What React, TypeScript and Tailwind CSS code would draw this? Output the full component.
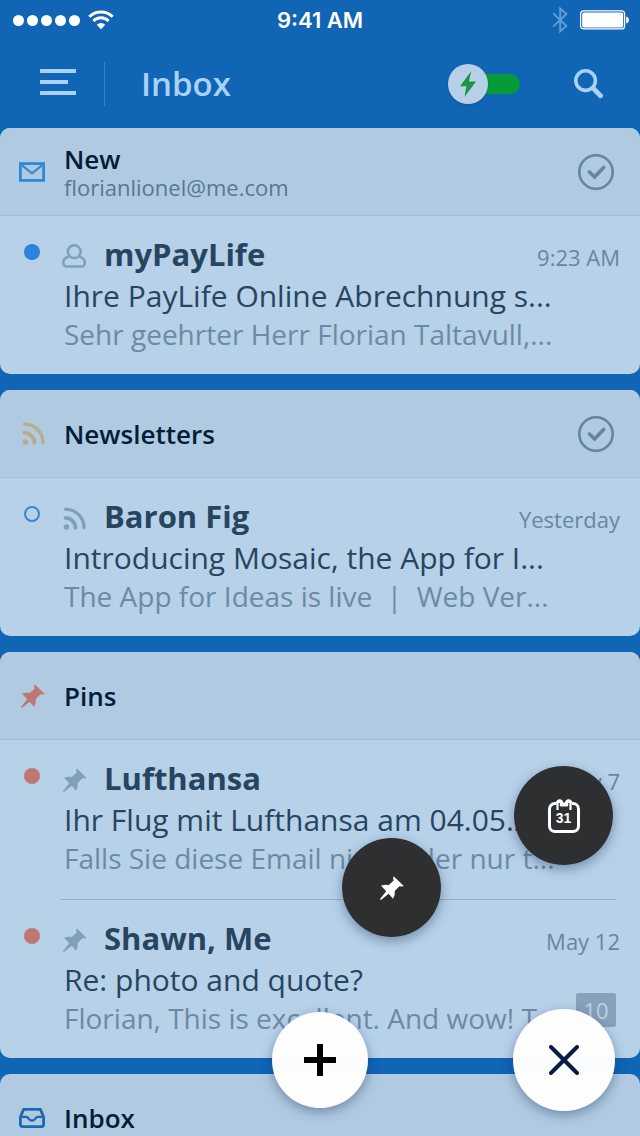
import type { ReactNode } from "react";

type IconProps = { className?: string };

function WifiIcon({ className }: IconProps) {
  return (
    <svg viewBox="0 0 26 20" className={className} fill="none" stroke="currentColor" strokeWidth="3" aria-hidden="true">
      <path d="M1.3 6.8a16.6 16.6 0 0 1 23.4 0" />
      <path d="M5.4 11a10.8 10.8 0 0 1 15.2 0" />
      <path d="M13 19.2l-4.2-4.4a6 6 0 0 1 8.4 0z" fill="currentColor" stroke="none" />
    </svg>
  );
}

function BluetoothIcon({ className }: IconProps) {
  return (
    <svg viewBox="0 0 16 28" className={className} fill="none" stroke="currentColor" strokeWidth="2" aria-hidden="true">
      <path d="M1.2 7.2L14.4 20 8.2 25.4V2.4L14.4 8 1.2 20.6" />
    </svg>
  );
}

function BatteryIcon({ className }: IconProps) {
  return (
    <svg viewBox="0 0 50 20" className={className} fill="none" aria-hidden="true">
      <rect x="0.6" y="0.9" width="44" height="18" rx="3" stroke="currentColor" strokeWidth="1.2" />
      <rect x="2.2" y="2.4" width="41" height="15" rx="1.6" fill="currentColor" />
      <path d="M46.2 6.6c3.6.4 3.6 6.4 0 6.8z" fill="currentColor" />
    </svg>
  );
}

function MenuIcon({ className }: IconProps) {
  return (
    <svg viewBox="0 0 36 26" className={className} fill="currentColor" aria-hidden="true">
      <path d="M0 0h36v4H0zM0 11h28v4H0zM0 22h36v4H0z" />
    </svg>
  );
}

function BoltIcon({ className }: IconProps) {
  return (
    <svg viewBox="0 0 16 26" className={className} fill="currentColor" aria-hidden="true">
      <path d="M11.3 0L0 15.2h6.4L4.4 26 16 10.4H8.9z" />
    </svg>
  );
}

function SearchIcon({ className }: IconProps) {
  return (
    <svg viewBox="0 0 30 30" className={className} fill="none" stroke="currentColor" aria-hidden="true">
      <circle cx="11.6" cy="11.6" r="9.8" strokeWidth="3.6" />
      <path d="M19 19l7.6 7.8" strokeWidth="4.8" strokeLinecap="round" />
    </svg>
  );
}

function MailIcon({ className }: IconProps) {
  return (
    <svg viewBox="0 0 26 20" className={className} fill="none" stroke="currentColor" aria-hidden="true">
      <rect x="1.4" y="1.6" width="23.2" height="16.8" strokeWidth="2.8" />
      <path d="M3 3.4l10 8 10-8" strokeWidth="2.2" />
    </svg>
  );
}

function RssIcon({ className }: IconProps) {
  return (
    <svg viewBox="0 0 24 24" className={className} fill="none" stroke="currentColor" strokeWidth="3.4" strokeLinecap="round" aria-hidden="true">
      <path d="M2.6 2.2A19.4 19.4 0 0 1 22 21.6" />
      <path d="M2.6 11.4a10.4 10.4 0 0 1 10.4 10.2" strokeWidth="4" />
      <circle cx="3.6" cy="20.8" r="2.9" fill="currentColor" stroke="none" />
    </svg>
  );
}

function PinIcon({ className }: IconProps) {
  return (
    <svg viewBox="0 0 24 24" className={className} fill="currentColor" aria-hidden="true">
      <path d="M13.6 .3L23.8 9.9 21.8 10.6 19.4 10.3 14.8 15.1Q15.400 19 13 22.800L8.700 17.700.9 23.900 0 23.100 6.200 15.200 1 9.800Q4.600 8.100 8.800 9L13.700 4.500 13.100 2.200z" />
    </svg>
  );
}

function InboxIcon({ className }: IconProps) {
  return (
    <svg viewBox="0 0 26 20" className={className} fill="none" stroke="currentColor" strokeLinejoin="round" aria-hidden="true">
      <path d="M4.6 1.4h16.8l3.2 7.6v7.6a2 2 0 0 1-2 2H3.4a2 2 0 0 1-2-2V9z" strokeWidth="2.8" />
      <path d="M2 8.8h5.4c1.2 0 1.4.6 2 1.6 1.8 3 5.4 3 7.2 0 .6-1 .8-1.6 2-1.6H24" strokeWidth="2.2" />
    </svg>
  );
}

function PersonIcon({ className }: IconProps) {
  return (
    <svg viewBox="0 0 24 24" className={className} fill="none" stroke="currentColor" strokeWidth="2.5" aria-hidden="true">
      <circle cx="12.2" cy="7.6" r="6.4" />
      <path d="M7 12.600C3.200 13.600 1.300 15.800 1.300 18.400c0 2.600 1.400 4.200 4 4.200h13.600c2.600 0 3.900-1.600 3.900-4.200 0-2.600-1.900-4.800-5.700-5.800" />
    </svg>
  );
}

function CheckCircleIcon({ className }: IconProps) {
  return (
    <svg viewBox="0 0 36 36" className={className} fill="none" stroke="currentColor" aria-hidden="true">
      <circle cx="18" cy="18" r="16.7" strokeWidth="2.6" />
      <path d="M11.4 18l5.2 5 9-9.6" strokeWidth="3.6" strokeLinecap="round" />
    </svg>
  );
}

function CalendarIcon({ className }: IconProps) {
  return (
    <svg viewBox="0 0 32 34" className={className} fill="none" stroke="currentColor" strokeWidth="3" aria-hidden="true">
      <path d="M8.5 4.5H7A5.5 5.5 0 0 0 1.5 10v17A5.5 5.5 0 0 0 7 32.5h18a5.5 5.5 0 0 0 5.5-5.5V10A5.5 5.5 0 0 0 25 4.5h-1.5" />
      <path d="M9.500 11V4a2 2 0 0 1 4 0v2.300h5V4a2 2 0 0 1 4 0V11" strokeWidth="2.200" />
      <path d="M9.500 4a2 2 0 0 1 4 0v1.300h5V4a2 2 0 0 1 4 0" strokeWidth="3.400" />
    </svg>
  );
}

function PlusIcon({ className }: IconProps) {
  return (
    <svg viewBox="0 0 32 32" className={className} stroke="currentColor" strokeWidth="6" aria-hidden="true">
      <path d="M16 0v32M0 16h32" />
    </svg>
  );
}

function CloseIcon({ className }: IconProps) {
  return (
    <svg viewBox="0 0 30 30" className={className} stroke="currentColor" strokeWidth="4" strokeLinecap="round" aria-hidden="true">
      <path d="M2 2l26 26M28 2L2 28" />
    </svg>
  );
}

function StatusBar() {
  return (
    <div className="grid h-10 grid-cols-3 items-center px-[10px] text-white">
      <div className="flex items-center gap-2 pl-[3px]">
        <div className="flex gap-[3px]">
          {[1, 2, 3, 4, 5].map((dot) => (
            <span key={dot} className="size-[11px] rounded-full bg-white" />
          ))}
        </div>
        <WifiIcon className="h-5 w-[26px]" />
      </div>
      <span className="text-center font-[Inter,sans-serif] text-[22px] font-semibold">9:41 AM</span>
      <div className="flex items-center justify-end gap-3">
        <BluetoothIcon className="h-7 w-4 text-[#5c9bd8]" />
        <BatteryIcon className="h-5 w-[50px]" />
      </div>
    </div>
  );
}

function TopBar() {
  return (
    <header className="flex h-[88px] items-center pr-9 pl-10 text-[#a9d2fb]">
      <button type="button" aria-label="Menu" className="pb-1">
        <MenuIcon className="h-[26px] w-9" />
      </button>
      <span className="ml-7 h-11 w-px bg-[#3a7fc4]" />
      <h1 className="ml-9 flex-1 text-[33px] font-semibold">Inbox</h1>
      <button type="button" role="switch" aria-checked="true" aria-label="Smart inbox" className="flex items-center">
        <span className="z-10 flex size-10 items-center justify-center rounded-full bg-[#b7d0e8] shadow-sm">
          <BoltIcon className="h-[26px] w-4 text-[#1a9640]" />
        </span>
        <span className="-ml-2 h-5 w-10 rounded-r-full bg-[#079a38]" />
      </button>
      <button type="button" aria-label="Search" className="ml-[54px]">
        <SearchIcon className="size-[30px]" />
      </button>
    </header>
  );
}

type SectionProps = {
  title: string;
  subtitle?: string;
  icon: ReactNode;
  checkable?: boolean;
  children?: ReactNode;
};

function Section({ title, subtitle, icon, checkable, children }: SectionProps) {
  return (
    <section className="shrink-0 overflow-hidden rounded-[10px] bg-[#b7d1e9]">
      <div className="flex h-[88px] items-center border-b border-[#a3bdd6] bg-[#b0cae2] pr-[26px]">
        <span className="flex w-16 justify-center">{icon}</span>
        <div className="flex-1">
          <h2 className="text-[26px] leading-8 font-semibold text-[#031d36]">{title}</h2>
          {subtitle && <p className="text-[22px] leading-[25px] text-[#587792]">{subtitle}</p>}
        </div>
        {checkable && (
          <button type="button" aria-label={`Mark ${title} as done`} className="text-[#6484a4]">
            <CheckCircleIcon className="size-9" />
          </button>
        )}
      </div>
      {children}
    </section>
  );
}

type MessageProps = {
  marker: string;
  icon: ReactNode;
  sender: string;
  time: string;
  subject: string;
  preview: string;
  count?: number;
};

function Message({ marker, icon, sender, time, subject, preview, count }: MessageProps) {
  return (
    <article className="flex h-[158px] pt-[18px] whitespace-pre">
      <div className="flex w-[60px] shrink-0 justify-center pt-[10px] pl-1">
        <span className={`size-4 rounded-full ${marker}`} />
      </div>
      <div className="min-w-0 flex-1 pr-5 pl-1">
        <div className="flex h-11 items-center">
          <span className="flex w-10 text-[#829fba]">{icon}</span>
          <h3 className="flex-1 pb-1 text-[31px] leading-10 font-bold text-[#27455f]">{sender}</h3>
          <time className="pt-0.5 text-[22px] text-[#6886a0]">{time}</time>
        </div>
        <p className="text-[30px] leading-9 text-[#27455f]">{subject}</p>
        <div className="flex h-10 items-center justify-between pr-1">
          <p className="text-[28px] leading-10 text-[#6c8aa4]">{preview}</p>
          {count && (
            <span className="mb-4 w-10 rounded-xs bg-[#87a1ba] text-center text-[22px] leading-[34px] text-[#b7d1e9]">
              {count}
            </span>
          )}
        </div>
      </div>
    </article>
  );
}

type FabProps = { label: string; className: string; children: ReactNode };

function Fab({ label, className, children }: FabProps) {
  return (
    <button
      type="button"
      aria-label={label}
      className={`absolute flex items-center justify-center rounded-full shadow-[0_4px_12px_rgba(20,40,80,0.4)] ${className}`}
    >
      {children}
    </button>
  );
}

export default function App() {
  return (
    <div className="relative flex h-screen flex-col overflow-hidden bg-[#1065b4] font-['Open_Sans',sans-serif]">
      <StatusBar />
      <TopBar />
      <main className="flex min-h-0 flex-1 flex-col gap-4 overflow-hidden">
        <Section
          title="New"
          subtitle="florianlionel@me.com"
          icon={<MailIcon className="h-5 w-[26px] text-[#3287d7]" />}
          checkable
        >
          <Message
            marker="bg-[#2b84da]"
            icon={<PersonIcon className="-ml-0.5 size-6" />}
            sender="myPayLife"
            time="9:23 AM"
            subject="Ihre PayLife Online Abrechnung s..."
            preview="Sehr geehrter Herr Florian Taltavull,..."
          />
        </Section>
        <Section title="Newsletters" icon={<RssIcon className="ml-0.5 size-[23px] text-[#b9ad86]" />} checkable>
          <Message
            marker="border-2 border-[#3b84cb]"
            icon={<RssIcon className="-ml-px size-[23px]" />}
            sender="Baron Fig"
            time="Yesterday"
            subject="Introducing Mosaic, the App for I..."
            preview="The App for Ideas is live  |  Web Ver..."
          />
        </Section>
        <Section title="Pins" icon={<PinIcon className="ml-0.5 size-6 text-[#bf7774]" />}>
          <Message
            marker="bg-[#bf7774]"
            icon={<PinIcon className="-ml-px size-6" />}
            sender="Lufthansa"
            time="May 7"
            subject="Ihr Flug mit Lufthansa am 04.05.2..."
            preview="Falls Sie diese Email nicht oder nur t..."
          />
          <div className="mr-6 ml-[60px] h-0.5 border-b border-[#95b0cb]" />
          <Message
            marker="bg-[#bf7774]"
            icon={<PinIcon className="-ml-px size-6" />}
            sender="Shawn, Me"
            time="May 12"
            subject="Re: photo and quote?"
            preview="Florian, This is excellent. And wow! T..."
            count={10}
          />
        </Section>
        <Section title="Inbox" icon={<InboxIcon className="h-5 w-[26px] text-[#1d67b1]" />} />
      </main>

      <Fab label="Calendar" className="right-[27px] bottom-[271px] size-[99px] bg-[#2b2c2d]/98 text-white">
        <CalendarIcon className="h-[34px] w-8" />
        <span className="absolute pt-1 font-['Liberation_Sans',sans-serif] text-[14px] leading-4 font-bold">31</span>
      </Fab>
      <Fab label="Pins" className="right-[199px] bottom-[199px] size-[99px] bg-[#2b2c2d]/98 text-white">
        <PinIcon className="size-6" />
      </Fab>
      <Fab label="Compose" className="right-[272px] bottom-7 size-24 bg-white/98 text-black">
        <PlusIcon className="size-8" />
      </Fab>
      <Fab label="Close" className="right-[25px] bottom-[25px] size-[102px] bg-white/98 text-[#081d4a]">
        <CloseIcon className="size-[30px]" />
      </Fab>
    </div>
  );
}
